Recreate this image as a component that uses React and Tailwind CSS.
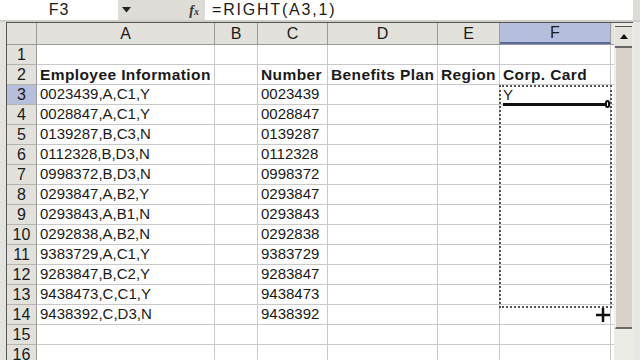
import React from 'react';

const cols = [
  { key: 'A', w: 'w-[178px]' },
  { key: 'B', w: 'w-[43px]' },
  { key: 'C', w: 'w-[70px]' },
  { key: 'D', w: 'w-[110px]' },
  { key: 'E', w: 'w-[62px]' },
  { key: 'F', w: 'w-[111px]' },
];

const data = [
  ['0023439,A,C1,Y', '0023439'],
  ['0028847,A,C1,Y', '0028847'],
  ['0139287,B,C3,N', '0139287'],
  ['0112328,B,D3,N', '0112328'],
  ['0998372,B,D3,N', '0998372'],
  ['0293847,A,B2,Y', '0293847'],
  ['0293843,A,B1,N', '0293843'],
  ['0292838,A,B2,N', '0292838'],
  ['9383729,A,C1,Y', '9383729'],
  ['9283847,B,C2,Y', '9283847'],
  ['9438473,C,C1,Y', '9438473'],
  ['9438392,C,D3,N', '9438392'],
];

function rowCells(n) {
  if (n === 2) return { A: 'Employee Information', C: 'Number', D: 'Benefits Plan', E: 'Region', F: 'Corp. Card', bold: true };
  if (n >= 3 && n <= 14) {
    const [a, c] = data[n - 3];
    return { A: a, C: c, F: n === 3 ? 'Y' : '' };
  }
  return {};
}

export default function App() {
  const rows = Array.from({ length: 16 }, (_, i) => i + 1);

  return (
    <div className="w-[640px] h-[360px] overflow-hidden bg-[#e4e3df] font-['Liberation_Sans',Arial,sans-serif] text-[#1a1a1a] flex flex-col">
      {/* formula bar */}
      <div className="h-[20px] flex items-stretch shrink-0">
        <div className="w-[118px] bg-white flex items-center justify-center text-[16px] tracking-[1px]">F3</div>
        <div className="w-[87px] flex items-center bg-[#dedcd6]">
          <svg width="10" height="6" viewBox="0 0 10 6" className="ml-[4px]">
            <path d="M0 0 H9 L4.5 5.5 Z" fill="#222" />
          </svg>
          <span className="ml-auto mr-[6px] text-[14px] italic font-bold font-['Liberation_Serif',serif] text-[#333]">f<span className="text-[10px]">x</span></span>
        </div>
        <div className="w-[428px] bg-white flex items-center pl-[7px] text-[16px] tracking-[1.8px]">=RIGHT(A3,1)</div>
        <div className="flex-1 bg-[#dedcd6]" />
      </div>
      <div className="h-[2px] bg-[#cfcdc6] shrink-0" />

      {/* sheet area */}
      <div className="flex flex-1 min-h-0">
        <div className="w-[6px] bg-[#e4e3df] shrink-0" />
        <div className="relative w-[608px] shrink-0 bg-white border-l border-t border-[#555] overflow-hidden">
          {/* column headers */}
          <div className="flex h-[22px] bg-[#e2e1dc] border-b border-[#9a9a9a]">
            <div className="w-[30px] shrink-0 border-r border-[#9a9a9a]" />
            {cols.map(c => (
              <div
                key={c.key}
                className={`${c.w} shrink-0 border-r border-[#9a9a9a] flex items-center justify-center text-[16px] ${c.key === 'F' ? 'bg-[#b5bedb] border-b-2 border-b-[#5a6a99]' : ''}`}
              >
                {c.key}
              </div>
            ))}
            <div className="flex-1" />
          </div>

          {rows.map(n => {
            const r = rowCells(n);
            return (
              <div key={n} className="flex h-[20px] border-b border-[#c9c9c9]">
                <div className={`w-[30px] shrink-0 flex items-center justify-center text-[16px] border-r border-[#9a9a9a] border-b border-b-[#b5b4ae] -mb-px ${n === 3 ? 'bg-[#b5bedb]' : 'bg-[#e2e1dc]'}`}>
                  {n}
                </div>
                {cols.map(c => (
                  <div
                    key={c.key}
                    className={`${c.w} shrink-0 border-r border-[#c9c9c9] pl-[3px] flex items-center whitespace-nowrap ${r.bold ? 'font-bold text-[15.5px] tracking-[0.4px]' : 'text-[15px]'} ${c.key === 'F' && n === 3 ? 'items-start -mt-px' : ''}`}
                  >
                    {r[c.key] || ''}
                  </div>
                ))}
                <div className="flex-1" />
              </div>
            );
          })}

          {/* selection marquee F3:F13 */}
          <div className="absolute left-[492px] top-[62px] w-[113px] h-[223px] border-2 border-dotted border-[#555]" />
          {/* bottom border of active cell */}
          <div className="absolute left-[496px] top-[80px] w-[104px] h-[3px] bg-[#111]" />
          <div className="absolute left-[598px] top-[77px] w-[5px] h-[8px] rounded-full border-2 border-[#111] bg-white" />
          {/* fill cursor */}
          <svg className="absolute left-[588px] top-[284px]" width="16" height="16" viewBox="0 0 16 16">
            <path d="M8 1 V15 M1 8 H15" stroke="#111" strokeWidth="2.5" />
          </svg>
        </div>

        {/* vertical scrollbar */}
        <div className="w-[19px] shrink-0 flex flex-col bg-[#ecebe6] border-t border-[#555]">
          <div className="h-[3px]" />
          <div className="h-[22px] mx-[1px] bg-[#e4e2db] border-t border-[#555] border-b-2 border-b-[#666] flex items-center justify-center">
            <svg width="8" height="5" viewBox="0 0 8 5">
              <path d="M0 5 L4 0 L8 5 Z" fill="#111" />
            </svg>
          </div>
          <div className="h-[281px] mx-[1px] bg-[#d6d3c9] border-l border-[#f4f3ef] border-b-2 border-b-[#6a6a6a]" />
          <div className="flex-1" />
        </div>
        <div className="flex-1 bg-[#e8e8e6]" />
      </div>
    </div>
  );
}
